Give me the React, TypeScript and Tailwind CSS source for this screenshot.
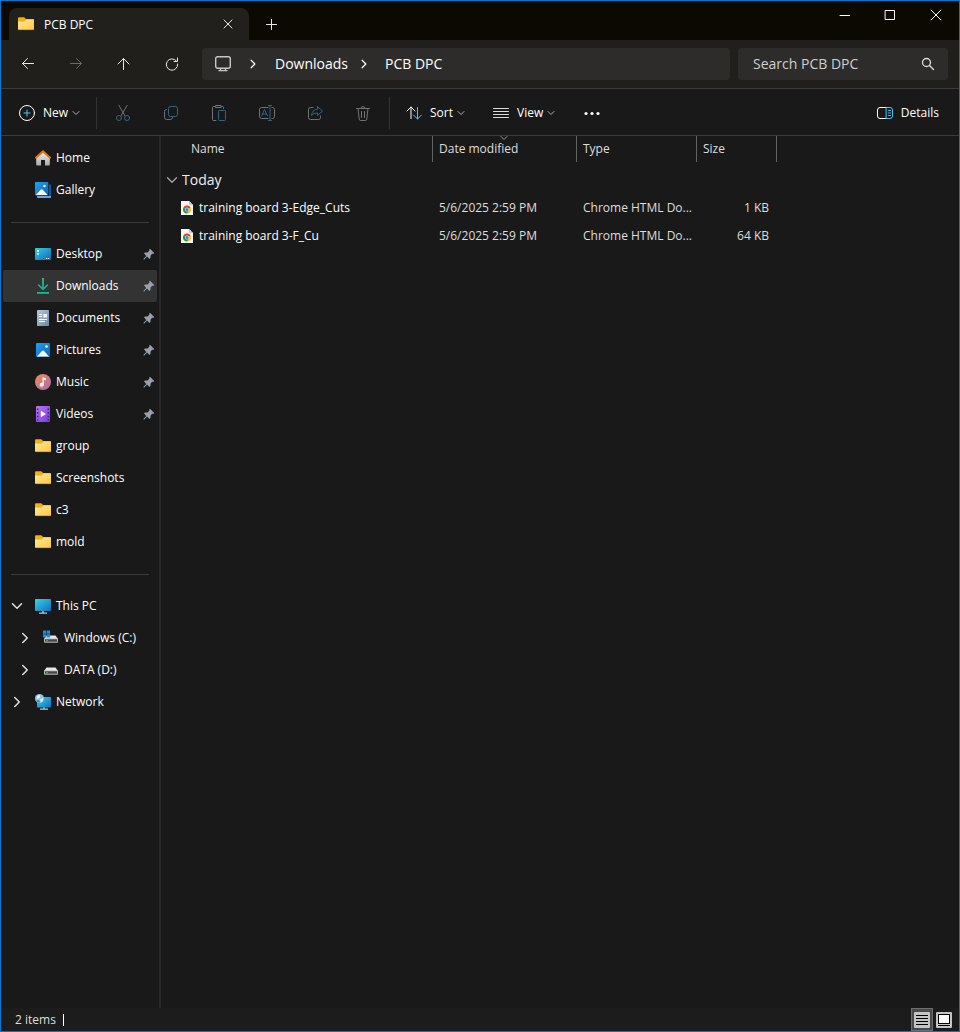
import { useState, type ReactNode } from 'react';

type IconProps = { className?: string };

const FolderIcon = ({ className = 'size-4' }: IconProps) => (
  <svg className={className} viewBox="0 0 16 16" aria-hidden="true">
    <defs>
      <linearGradient id="folder" x1="0" y1="0" x2="1" y2="1">
        <stop offset="0" stopColor="#ffe9a0" />
        <stop offset="1" stopColor="#ffc83d" />
      </linearGradient>
    </defs>
    <path d="M0 2.5Q0 1.3 1 1.3H6.2L8 3H15Q16 3 16 4V8H0Z" fill="#f4ad0c" />
    <path d="M0 5.6H6.5L8.4 3.6H16V13Q16 14 15 14H1Q0 14 0 13Z" fill="url(#folder)" />
    <path d="M.3 13.6H15.7" stroke="#d99b1c" strokeWidth=".8" />
  </svg>
);

const HomeIcon = () => (
  <svg className="size-4" viewBox="0 0 16 16" aria-hidden="true">
    <defs>
      <linearGradient id="house" x1="0" y1="0" x2="0" y2="1">
        <stop offset="0" stopColor="#eeeeee" />
        <stop offset="1" stopColor="#a9a9a9" />
      </linearGradient>
    </defs>
    <path d="M1.2 8 8 2l6.8 6v6.6q0 .9-.9.9H10V10H6v5.500H2.100q-.9 0-.9-.9Z" fill="url(#house)" />
    <path d="M.9 7.700 8 1.300l7.100 6.400" fill="none" stroke="#e8700f" strokeWidth="2" strokeLinecap="round" strokeLinejoin="round" />
  </svg>
);

const BlueGradient = ({ id }: { id: string }) => (
  <linearGradient id={id} x1="0" y1="0" x2="1" y2="1">
    <stop offset="0" stopColor="#1fa4ee" />
    <stop offset="1" stopColor="#0b63b8" />
  </linearGradient>
);

const GalleryIcon = () => (
  <svg className="size-4" viewBox="0 0 16 16" aria-hidden="true">
    <defs><BlueGradient id="gallery" /></defs>
    <path d="M14 2.500h1.300q.7 0 .7.8V14h-2Z" fill="#0f57a5" />
    <path d="M2 14H16v1q0 1-1 1H3q-1 0-1-1Z" fill="#5fa8e6" />
    <rect width="13.300" height="13.500" rx="1" fill="url(#gallery)" />
    <path d="M.8 13 5.700 7.800q1-.9 2 0L12.600 13Z" fill="#fff" />
    <circle cx="9.500" cy="4" r="1.200" fill="#fff" />
  </svg>
);

const DesktopIcon = () => (
  <svg className="size-4" viewBox="0 0 16 16" aria-hidden="true">
    <defs>
      <linearGradient id="desktop" x1="0" y1="0" x2="1" y2="1">
        <stop offset="0" stopColor="#31cfe0" />
        <stop offset="1" stopColor="#1068bd" />
      </linearGradient>
    </defs>
    <rect y="2" width="16" height="12" rx=".8" fill="url(#desktop)" />
    <path d="M2 4h2v2H2zM2 7h2v1.500H2z" fill="#fff" />
    <path d="M11 12.500h1.200M13 12.500h1.200" stroke="#fff" />
  </svg>
);

const DownloadsIcon = () => (
  <svg className="size-4" viewBox="0 0 16 16" aria-hidden="true">
    <defs>
      <linearGradient id="down" x1="0" y1="0" x2="0" y2="1">
        <stop offset="0" stopColor="#2ed196" />
        <stop offset="1" stopColor="#16a89c" />
      </linearGradient>
    </defs>
    <path d="M7.200 0h1.600v9.400l3.300-3.200 1.100 1.100L8 12.500 2.800 7.300l1.100-1.100 3.300 3.200Z" fill="url(#down)" />
    <path d="M2 14h12v1.800H2z" fill="#1bb894" />
  </svg>
);

const DocumentsIcon = () => (
  <svg className="size-4" viewBox="0 0 16 16" aria-hidden="true">
    <defs>
      <linearGradient id="doc" x1="0" y1="0" x2="1" y2="1">
        <stop offset="0" stopColor="#b9c9d8" />
        <stop offset="1" stopColor="#6c87a3" />
      </linearGradient>
    </defs>
    <rect x="2" width="12" height="16" rx=".8" fill="url(#doc)" />
    <path d="M4 4.500h3M4 6.500h3M4 9.500h8M4 11.500h6" stroke="#fff" />
    <path d="M8.500 4h3.500v3.500H8.500z" fill="#fff" />
  </svg>
);

const PicturesIcon = () => (
  <svg className="size-4" viewBox="0 0 16 16" aria-hidden="true">
    <defs><BlueGradient id="pictures" /></defs>
    <rect x="1" y="1" width="14" height="14" rx="1" fill="url(#pictures)" />
    <path d="M2 14.500 7 9q1-.9 2 0l5 5.500Z" fill="#fff" />
    <circle cx="11.500" cy="4.500" r="1.200" fill="#fff" />
  </svg>
);

const MusicIcon = () => (
  <svg className="size-4" viewBox="0 0 16 16" aria-hidden="true">
    <defs>
      <linearGradient id="music" x1="0" y1="0" x2="1" y2="1">
        <stop offset="0" stopColor="#f58a55" />
        <stop offset="1" stopColor="#a86ab0" />
      </linearGradient>
    </defs>
    <circle cx="8" cy="8" r="8" fill="url(#music)" />
    <circle cx="6.700" cy="10.800" r="2" fill="#fff" />
    <path d="M7.500 3.200 11 4.300v2L8.700 5.600v5.200H7.500Z" fill="#fff" />
  </svg>
);

const VideosIcon = () => (
  <svg className="size-4" viewBox="0 0 16 16" aria-hidden="true">
    <defs>
      <linearGradient id="video" x1="0" y1="0" x2="1" y2="1">
        <stop offset="0" stopColor="#b877f0" />
        <stop offset="1" stopColor="#7a3bdc" />
      </linearGradient>
    </defs>
    <rect x="1" width="14" height="16" rx="1" fill="url(#video)" />
    <path d="M2.700 2.500v12M13.300 2.500v12" stroke="#3f1a85" strokeWidth="1.500" strokeDasharray="1.600 2" />
    <path d="M5.800 4.800 11 8l-5.200 3.200Z" fill="#fff" />
  </svg>
);

const Screen = ({ id }: { id: string }) => (
  <linearGradient id={id} x1="0" y1="0" x2="1" y2="1">
    <stop offset="0" stopColor="#37d3e3" />
    <stop offset="1" stopColor="#0f6fc4" />
  </linearGradient>
);

const PcIcon = () => (
  <svg className="size-4" viewBox="0 0 16 16" aria-hidden="true">
    <defs><Screen id="pc" /></defs>
    <path d="M7 12h2v3H7z" fill="#8d979e" />
    <path d="M4 14.500h8v1.300H4z" fill="#b8c2c9" />
    <rect y="1" width="16" height="12" rx=".8" fill="url(#pc)" />
  </svg>
);

const NetworkIcon = () => (
  <svg className="size-4" viewBox="0 0 16 16" aria-hidden="true">
    <defs><Screen id="net" /></defs>
    <path d="M8 12h2v3H8z" fill="#8d979e" />
    <path d="M5 14.500h8v1.300H5z" fill="#b8c2c9" />
    <rect x="2" y="3" width="14" height="10.500" rx=".8" fill="url(#net)" />
    <circle cx="4.500" cy="4.500" r="4.500" fill="#8cc8e6" />
    <path d="M1.500 2.500Q4 0 5.500 1.500L4.500 4 2.500 5ZM5 5.500l3-1.500v2.500L6 8.500Z" fill="#e3f3fa" />
    <path d="M1 6.500 4 6l1 2.500Q2.500 9 1 6.500Z" fill="#3f86b5" />
  </svg>
);

const DriveIcon = ({ windows = false }: { windows?: boolean }) => (
  <svg className="size-4" viewBox="0 0 16 16" aria-hidden="true">
    <path d="M3.500 5.500h9L15 9H1Z" fill="#e6e6e6" />
    <rect x="1" y="8.500" width="14" height="4.200" rx=".8" fill="#b5b5b5" />
    <rect x="2" y="9.300" width="12" height="2.400" fill="#474747" />
    <path d="M3.500 10h1.300v1.200H3.500z" fill="#4ad66d" />
    {windows && (
      <path d="M0 .5h3.300v3.200H0zM3.900.5h3.200v3.200H3.900zM0 4.300h3.300v3.200H0zM3.900 4.300h3.200v3.200H3.900z" fill="#1492e6" />
    )}
  </svg>
);

const PinIcon = () => (
  <svg className="size-3" viewBox="0 0 12 12" aria-hidden="true">
    <path d="M7 .8 11.200 5 10 5.900l-.8-.1-1.600 1.700-.2 2.600-1 .8L4 8.500 1.200 11.400.4 11.300.5 10.700 3.300 7.900 1.100 5.600l.8-1L4.500 4.500 6.300 2.800 6.200 1.600Z" fill="#98a1a7" />
  </svg>
);

const HtmlFileIcon = () => (
  <svg className="h-3.5 w-3" viewBox="0 0 12 14" aria-hidden="true">
    <path d="M0 0h8l4 4v10H0Z" fill="#f7f7f7" />
    <path d="M8 0v4h4Z" fill="#c9c9c9" />
    <circle cx="6" cy="8.500" r="4" fill="#fbc116" />
    <path d="M6 8.500 2.540 6.500A4 4 0 0 1 9.460 6.500Z" fill="#e33b2e" />
    <path d="M6 8.500 2.540 6.500A4 4 0 0 0 6 12.500L8 9Z" fill="#229a4b" />
    <circle cx="6" cy="8.500" r="1.900" fill="#fff" />
    <circle cx="6" cy="8.500" r="1.500" fill="#3b7de8" />
  </svg>
);

// thin line icon used by the title bar, navigation row and toolbar
const Line = ({ d, accent, className = 'size-4' }: { d: string; accent?: string; className?: string }) => (
  <svg className={className} viewBox="0 0 16 16" fill="none" stroke="currentColor" strokeLinecap="round" strokeLinejoin="round" aria-hidden="true">
    <path d={d} />
    {accent && <path d={accent} stroke="#4cc2ff" />}
  </svg>
);

const Chevron = ({ d, className }: { d: string; className: string }) => (
  <svg className={className} viewBox="0 0 8 8" fill="none" stroke="currentColor" strokeLinecap="round" strokeLinejoin="round" aria-hidden="true">
    <path d={d} />
  </svg>
);
const DOWN = 'M1 2.500 4 5.500 7 2.500';
const RIGHT = 'M2.500 1 5.500 4 2.500 7';

const editActions = [
  { label: 'Cut', d: 'M4 .5 10 11M12 .5 6 11', accent: 'M6.500 13a2.500 2.500 0 1 1-5 0 2.500 2.500 0 0 1 5 0ZM14.500 13a2.500 2.500 0 1 1-5 0 2.500 2.500 0 0 1 5 0Z' },
  { label: 'Copy', d: 'M3.500 4.500Q1.500 4.500 1.500 6.500V12.500Q1.500 14.500 3.500 14.500H7.500Q9.500 14.500 9.500 12.500', accent: 'M7.500 1.500H12.500Q14.500 1.500 14.500 3.500V9.500Q14.500 11.500 12.500 11.500H7.500Q5.500 11.500 5.500 9.500V3.500Q5.500 1.500 7.500 1.500Z' },
  { label: 'Paste', d: 'M5 15.500H2.500Q1.500 15.500 1.500 14.500V2.500Q1.500 1.500 2.500 1.500H4.500M10.500 1.500H11.500Q12.500 1.500 12.500 2.500V3.500M5 .5H10V2.500H5Z', accent: 'M8.500 5.500H13.500Q14.500 5.500 14.500 6.500V14.500Q14.500 15.500 13.500 15.500H8.500Q7.500 15.500 7.500 14.500V6.500Q7.500 5.500 8.500 5.500Z' },
  { label: 'Rename', d: 'M9 2.500H2.500Q.5 2.500 .5 4.500V11.500Q.5 13.500 2.500 13.500H9M13 2.500H13.500Q15.500 2.500 15.500 4.500V11.500Q15.500 13.500 13.500 13.500H13', accent: 'M9.500 .5H12.500M9.500 15.500H12.500M11 .5V15.500M2.500 11 5.500 4.500 8.500 11M3.700 9H7.300' },
  { label: 'Share', d: 'M6 2.500H3.500Q1.500 2.500 1.500 4.500V12.500Q1.500 14.500 3.500 14.500H11.500Q13.500 14.500 13.500 12.500V11', accent: 'M10.500 1.500 15.500 6 10.500 10.500V8Q6.500 7.500 4.500 10.500 5 4.500 10.500 4Z' },
  { label: 'Delete', d: 'M1.500 3.500H14.500M6 3.500Q6 1.500 8 1.500T10 3.500M3 3.500 4.200 14Q4.300 15.500 5.500 15.500H10.500Q11.700 15.500 11.800 14L13 3.500M6.500 6.500V12.500M9.500 6.500V12.500' },
];

const pinned = [
  { name: 'Desktop', icon: <DesktopIcon /> },
  { name: 'Downloads', icon: <DownloadsIcon /> },
  { name: 'Documents', icon: <DocumentsIcon /> },
  { name: 'Pictures', icon: <PicturesIcon /> },
  { name: 'Music', icon: <MusicIcon /> },
  { name: 'Videos', icon: <VideosIcon /> },
];

const files = [
  { name: 'training board 3-Edge_Cuts', date: '5/6/2025 2:59 PM', type: 'Chrome HTML Do...', size: '1 KB' },
  { name: 'training board 3-F_Cu', date: '5/6/2025 2:59 PM', type: 'Chrome HTML Do...', size: '64 KB' },
];

type NavItemProps = {
  name: string;
  icon: ReactNode;
  pin?: boolean;
  active?: boolean;
  onClick?: () => void;
};

function NavItem({ name, icon, pin, active, onClick }: NavItemProps) {
  return (
    <button
      type="button"
      onClick={onClick}
      className={`flex h-8 w-full items-center gap-[5px] rounded-xs pr-0.5 pl-8 text-left ${active ? 'bg-[#333333]' : ''}`}
    >
      {icon}
      <span className="flex-1">{name}</span>
      {pin && <PinIcon />}
    </button>
  );
}

function TreeItem({ name, icon, open, nested }: NavItemProps & { open?: boolean; nested?: boolean }) {
  return (
    <button type="button" className={`flex h-8 w-full items-center text-left ${nested ? 'pl-4' : 'pl-2'}`}>
      <Chevron d={open ? DOWN : RIGHT} className="size-3 text-[#e0e0e0]" />
      <span className="ml-3">{icon}</span>
      <span className="ml-[5px]">{name}</span>
    </button>
  );
}

function TitleBar() {
  return (
    <header className="flex h-[39px] bg-[#0c0903]">
      <div className="mt-[7px] ml-2 flex w-60 items-center rounded-t-lg bg-[#22201d] pr-[13px] pl-[9px]">
        <FolderIcon />
        <span className="ml-2.5 flex-1 pt-px text-xs font-medium text-white">PCB DPC</span>
        <button type="button" aria-label="Close tab" className="text-[#e8e8e8]">
          <Line d="M4 4 12 12M12 4 4 12" />
        </button>
      </div>
      <button type="button" aria-label="New tab" className="mt-[7px] ml-3.5 text-[#e8e8e8]">
        <Line d="M8.500 3.500V13.500M3.500 8.500H13.500" />
      </button>
      <div className="ml-auto flex h-7 text-white">
        <button type="button" aria-label="Minimize" className="flex w-[46px] items-center justify-center">
          <Line d="M4 8.500H13.500" />
        </button>
        <button type="button" aria-label="Maximize" className="flex w-[46px] items-center justify-center">
          <Line d="M3.500 3.500H12.500V12.500H3.500Z" />
        </button>
        <button type="button" aria-label="Close" className="flex w-[46px] items-center justify-center">
          <Line d="M3 3 13 13M13 3 3 13" />
        </button>
      </div>
    </header>
  );
}

function NavigationRow() {
  return (
    <div className="flex h-[49px] items-center border-b border-[#3a3a3a] bg-[#201f1c] pr-[11px] pl-[3px]">
      <button type="button" aria-label="Back" className="flex w-12 justify-center text-[#e8e8e8]">
        <Line d="M13.500 7.500H2.500M7.500 2.500 2.500 7.500 7.500 12.500" />
      </button>
      <button type="button" aria-label="Forward" disabled className="flex w-12 justify-center text-[#6b6a68]">
        <Line d="M2.500 7.500H13.500M8.500 2.500 13.500 7.500 8.500 12.500" />
      </button>
      <button type="button" aria-label="Up" className="flex w-12 justify-center text-[#e8e8e8]">
        <Line d="M7.500 13.500V2.500M2 8 7.500 2.500 13 8" />
      </button>
      <button type="button" aria-label="Refresh" className="flex w-12 justify-center text-[#e8e8e8]">
        <Line d="M12.500 5A5.700 5.700 0 1 0 13.700 8M13.500 2V5.500H10" />
      </button>
      <nav aria-label="Path" className="ml-1.5 flex h-8 flex-1 items-center rounded bg-[#2d2c2a] pl-[13px] text-sm text-white">
        <svg className="size-4 text-[#c8c8c8]" viewBox="0 0 16 16" fill="none" stroke="currentColor" aria-hidden="true">
          <rect x=".7" y=".7" width="14.600" height="11.600" rx="2" strokeWidth="1.400" />
          <path d="M5.500 12.500V14.500M10.500 12.500V14.500M3.500 14.700H12.500" strokeWidth="1.300" />
        </svg>
        <Chevron d={RIGHT} className="ml-[17px] size-2.5" />
        <a href="#downloads" className="ml-[17px] w-[69px] whitespace-nowrap">Downloads</a>
        <Chevron d={RIGHT} className="ml-[15px] size-2.5" />
        <a href="#pcb-dpc" className="ml-4 whitespace-nowrap">PCB DPC</a>
      </nav>
      <label className="ml-2 flex h-8 w-[210px] items-center rounded bg-[#2d2c2a] pr-3 pl-[15px]">
        <input type="text" aria-label="Search PCB DPC" placeholder="Search PCB DPC" className="min-w-0 flex-1 bg-transparent text-sm text-white outline-none placeholder:text-[#cfcfcf]" />
        <Line d="M10.500 6.500a4 4 0 1 1-8 0 4 4 0 0 1 8 0ZM9.500 9.500 13.500 13.500" className="size-4 stroke-[1.3] text-[#dddddd]" />
      </label>
    </div>
  );
}

function Toolbar() {
  return (
    <div className="flex h-[47px] items-center border-b border-[#3a3a3a] pt-0.5 pr-5 pl-[18px] text-xs text-white">
      <button type="button" className="flex w-[77px] items-center">
        <Line d="M15.500 8a7.500 7.500 0 1 1-15 0 7.500 7.500 0 0 1 15 0Z" accent="M8 5V11M5 8H11" />
        <span className="ml-2">New</span>
        <Chevron d={DOWN} className="ml-1 size-2 text-[#b0b0b0]" />
      </button>
      <div className="h-8 w-px bg-[#333333]" />
      <div className="mx-0.5 flex">
        {editActions.map((action) => (
          <button key={action.label} type="button" disabled aria-label={action.label} className="flex w-12 justify-center text-[#e0e0e0] opacity-45">
            <Line d={action.d} accent={action.accent} />
          </button>
        ))}
      </div>
      <div className="h-8 w-px bg-[#333333]" />
      <button type="button" className="ml-4 flex w-[87px] items-center">
        <Line d="M5 13.500V2M1 6 5 2 9 6" accent="M11.500 2.500V14M7.500 10 11.500 14 15.500 10" />
        <span className="ml-2">Sort</span>
        <Chevron d={DOWN} className="ml-1 size-2 text-[#b0b0b0]" />
      </button>
      <button type="button" className="flex w-[91px] items-center">
        <Line d="M.5 3.500H15.500M.5 6.500H15.500M.5 9.500H15.500M.5 12.500H15.500" className="size-4 text-[#dcdcdc]" />
        <span className="ml-2">View</span>
        <Chevron d={DOWN} className="ml-1 size-2 text-[#b0b0b0]" />
      </button>
      <button type="button" aria-label="See more">
        <svg className="size-4" viewBox="0 0 16 16" fill="currentColor" aria-hidden="true">
          <circle cx="2" cy="8.500" r="1.600" />
          <circle cx="8" cy="8.500" r="1.600" />
          <circle cx="14" cy="8.500" r="1.600" />
        </svg>
      </button>
      <button type="button" className="ml-auto flex items-center gap-2">
        <Line
          d="M9.500 2.500H3Q.5 2.500 .5 5V11Q.5 13.500 3 13.500H9.500"
          accent="M9.500 2.500H13Q15.500 2.500 15.500 5V11Q15.500 13.500 13 13.500H9.500ZM11.500 5.500H13.500M11.500 8H13.500M11.500 10.500H13.500"
        />
        Details
      </button>
    </div>
  );
}

function Sidebar() {
  const [current, setCurrent] = useState('Downloads');

  return (
    <aside className="w-40 shrink-0 border-r-2 border-[#282828] pt-[6px] pr-0.5 pl-0.5 text-xs text-white">
      <NavItem name="Home" icon={<HomeIcon />} />
      <NavItem name="Gallery" icon={<GalleryIcon />} />
      <hr className="mx-2 my-4 -mb-px border-[#3c3c3c]" />
      <div className="pt-4">
        {pinned.map((item) => (
          <NavItem key={item.name} {...item} pin active={item.name === current} onClick={() => setCurrent(item.name)} />
        ))}
        {['group', 'Screenshots', 'c3', 'mold'].map((name) => (
          <NavItem key={name} name={name} icon={<FolderIcon />} />
        ))}
      </div>
      <hr className="mx-2 my-4 -mb-px border-[#3c3c3c]" />
      <div className="pt-4">
        <TreeItem name="This PC" icon={<PcIcon />} open />
        <TreeItem name="Windows (C:)" icon={<DriveIcon windows />} nested />
        <TreeItem name="DATA (D:)" icon={<DriveIcon />} nested />
        <TreeItem name="Network" icon={<NetworkIcon />} />
      </div>
    </aside>
  );
}

function FileList() {
  return (
    <main className="min-w-0 flex-1">
      <table className="w-[616px] table-fixed border-separate border-spacing-0 text-left text-xs text-[#dedede]">
        <thead>
          <tr className="h-[26px]">
            <th className="w-[272px] border-r border-[#636363] pl-[30px] font-normal">Name</th>
            <th className="relative w-36 border-r border-[#636363] pl-1.5 font-normal">
              Date modified
              <Chevron d={DOWN} className="absolute -top-0.5 left-[67px] size-2 text-[#999999]" />
            </th>
            <th className="w-[120px] border-r border-[#636363] pl-1.5 font-normal">Type</th>
            <th className="w-20 border-r border-[#636363] pl-1.5 font-normal">Size</th>
          </tr>
        </thead>
        <tbody>
          <tr className="h-8">
            <th colSpan={4} className="pt-1 pl-[5px] font-normal">
              <button type="button" className="flex items-center gap-1 text-sm text-[#f0f0f0]">
                <Chevron d={DOWN} className="size-3 stroke-[0.8] text-[#aaaaaa]" />
                Today
              </button>
            </th>
          </tr>
          {files.map((file) => (
            <tr key={file.name} className="h-7">
              <td className="pl-5 text-white">
                <div className="flex items-center gap-1.5">
                  <HtmlFileIcon />
                  {file.name}
                </div>
              </td>
              <td className="pl-1.5">{file.date}</td>
              <td className="pl-1.5 whitespace-nowrap">{file.type}</td>
              <td className="pr-2 text-right">{file.size}</td>
            </tr>
          ))}
        </tbody>
      </table>
    </main>
  );
}

function StatusBar() {
  return (
    <footer className="flex h-[23px] items-center bg-[#1c1c1c] pr-[7px] pl-3.5 text-xs text-[#dedede]">
      <span className="w-12">2 items</span>
      <span className="h-3 w-px bg-white" />
      <div className="ml-auto flex h-full items-center gap-[3px]">
        <button type="button" aria-label="Details view" className="flex h-full w-[22px] items-center justify-center border border-[#6e6e6e] bg-[#4a4a4a]">
          <svg className="size-4" viewBox="0 0 16 16" aria-hidden="true">
            <rect width="16" height="16" rx="1" fill="#c4c4c4" />
            <path d="M2 3.500H14M2 6.500H14M2 9.500H14M2 12.500H14" stroke="#000" />
          </svg>
        </button>
        <button type="button" aria-label="Large thumbnails view">
          <svg className="size-4" viewBox="0 0 16 16" aria-hidden="true">
            <rect width="16" height="16" rx="1" fill="#c4c4c4" />
            <rect x="2.500" y="2.500" width="11" height="9" fill="#fff" stroke="#000" />
            <path d="M2 13.500H14" stroke="#000" />
          </svg>
        </button>
      </div>
    </footer>
  );
}

export default function App() {
  return (
    <div className="flex min-h-screen flex-col border border-[#0078d7] bg-[#191919] font-['Open_Sans','Noto_Sans',sans-serif]">
      <TitleBar />
      <NavigationRow />
      <Toolbar />
      <div className="flex flex-1">
        <Sidebar />
        <FileList />
      </div>
      <StatusBar />
    </div>
  );
}
